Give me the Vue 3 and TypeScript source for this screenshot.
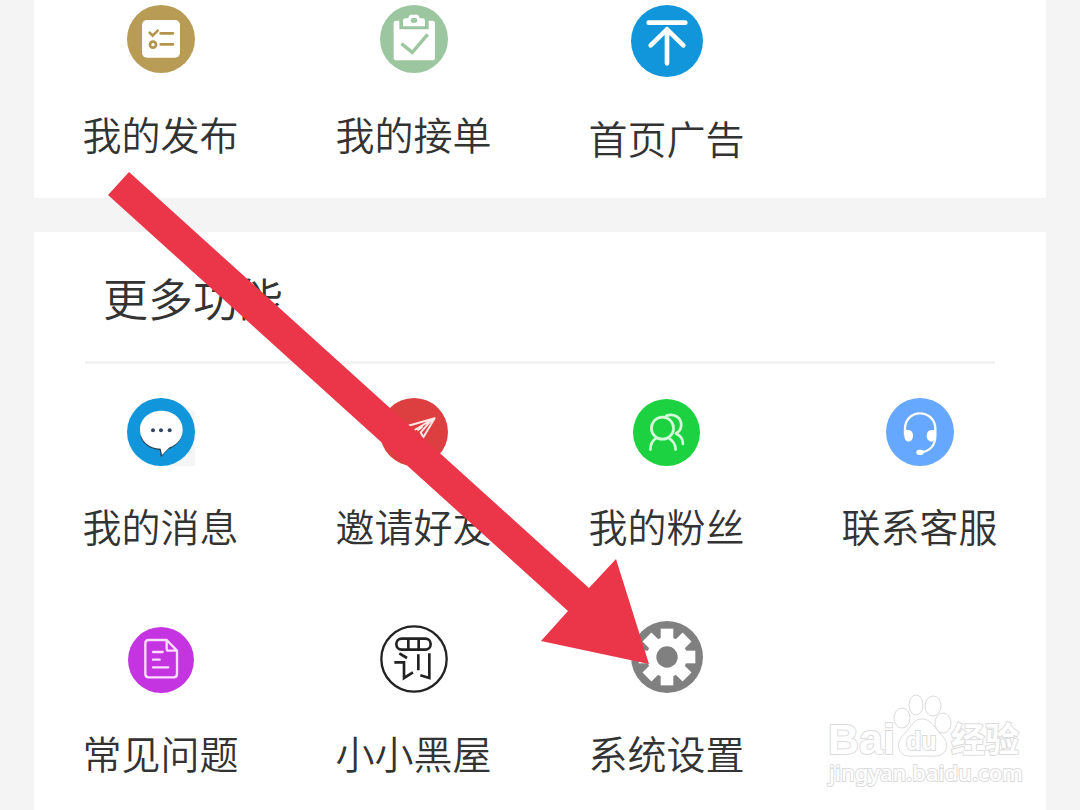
<script setup lang="ts">
interface Entry {
  id: string
  label: string
  size: number
  viewBox: string
}

const orders: Entry[] = [
  { id: 'publish', label: '我的发布', size: 68, viewBox: '168 15 204 204' },
  { id: 'accept', label: '我的接单', size: 68, viewBox: '162 15 204 204' },
  { id: 'advert', label: '首页广告', size: 72, viewBox: '150 15 216 216' },
]

const features: Entry[] = [
  { id: 'message', label: '我的消息', size: 68, viewBox: '168 55 204 204' },
  { id: 'invite', label: '邀请好友', size: 68, viewBox: '162 53 204 204' },
  { id: 'fans', label: '我的粉丝', size: 67, viewBox: '157 59 200 200' },
  { id: 'service', label: '联系客服', size: 68, viewBox: '165 53 204 204' },
  { id: 'faq', label: '常见问题', size: 66, viewBox: '171 50 198 198' },
  { id: 'blacklist', label: '小小黑屋', size: 68, viewBox: '162 45 204 204' },
  { id: 'settings', label: '系统设置', size: 72, viewBox: '300 213 216 216' },
]

const teeth = [0, 45, 90, 135, 180, 225, 270, 315]
</script>

<template>
  <main class="page">
    <nav class="card orders" aria-label="订单">
      <a v-for="item in orders" :key="item.id" class="entry" href="#">
        <svg class="icon" :width="item.size" :height="item.size" :viewBox="item.viewBox" aria-hidden="true">
          <g v-if="item.id === 'publish'">
            <circle cx="270" cy="117" r="102" fill="#b89b55" />
            <rect x="213" y="60" width="114" height="113" rx="15" fill="#fff" />
            <g fill="none" stroke="#b4944c" stroke-width="8" stroke-linecap="round">
              <path d="M236 98l9 9 15-15M269 100h37M269 133h37" />
              <circle cx="246" cy="134" r="9" />
            </g>
          </g>
          <g v-else-if="item.id === 'accept'">
            <circle cx="264" cy="117" r="102" fill="#9cc6a0" />
            <path d="M211 62h9v26h88V62h11q8 0 8 8v103q0 8-8 8H211q-8 0-8-8V70q0-8 8-8z" fill="#fff" />
            <path d="M231 79V63q0-8 8-8h6q3 0 4-6 1-5 6-5h18q5 0 6 5 1 6 4 6h6q8 0 8 8v16z" fill="#fff" />
            <ellipse cx="264" cy="61" rx="10" ry="8" fill="#9cc6a0" />
            <path d="M226 131l33 26 46-54" fill="none" stroke="#9cc6a0" stroke-width="10" />
          </g>
          <g v-else>
            <circle cx="258" cy="123" r="108" fill="#1296db" />
            <path d="M203 68h110M258 88v102M209 136l49-48 49 48" fill="none" stroke="#fff" stroke-width="14" stroke-linecap="round" stroke-linejoin="round" />
          </g>
        </svg>
        <span class="label">{{ item.label }}</span>
      </a>
    </nav>

    <section class="card more">
      <h2 class="title">更多功能</h2>
      <nav class="grid" aria-label="更多功能">
        <a v-for="item in features" :key="item.id" class="entry" href="#">
          <svg class="icon" :width="item.size" :height="item.size" :viewBox="item.viewBox" aria-hidden="true">
            <g v-if="item.id === 'message'">
              <path d="M340 78l32 20v161h-80z" fill="#f5f5f6" />
              <circle cx="270" cy="157" r="102" fill="#1296db" />
              <path d="M208 170c9 26 30 38 58 41l4 21c8-8 14-16 22-23 22-9 35-23 40-40z" fill="#263b4a" />
              <path d="M271 93c37 0 64 25 64 57 0 25-15 44-39 53-8 7-15 16-23 23l-4-19c-36-1-62-24-62-57 0-32 27-57 64-57z" fill="#fff" />
              <g fill="#34445c">
                <circle cx="246" cy="152" r="6" />
                <circle cx="270" cy="152" r="6" />
                <circle cx="296" cy="152" r="6" />
              </g>
            </g>
            <g v-else-if="item.id === 'invite'">
              <circle cx="264" cy="155" r="102" fill="#dd3f40" />
              <path d="M242 138l84-24-34 57-8-15 34-38-52 31M274 150l16-12" fill="none" stroke="#ffe6e4" stroke-width="6" stroke-linejoin="round" />
            </g>
            <g v-else-if="item.id === 'fans'">
              <circle cx="257" cy="159" r="100" fill="#1cd240" />
              <g fill="none" stroke="#d4fbd9" stroke-width="8" stroke-linecap="round">
                <circle cx="245" cy="146" r="33" />
                <path d="M256 109c23-8 45 5 45 27 0 13-6 21-16 26M209 210c0-17 7-29 19-35M264 176c13 8 20 19 20 34M286 163c14 6 20 16 20 30" />
              </g>
            </g>
            <g v-else-if="item.id === 'service'">
              <circle cx="267" cy="155" r="102" fill="#66a8ff" />
              <path d="M222 165v-20c0-27 20-46 45-46s46 19 46 46v21c0 29-17 48-47 50" fill="none" stroke="#fff" stroke-width="7" />
              <path d="M220 149h13q13 2 13 17t-13 18q-13-2-13-17zM314 149h-13q-14 2-14 17t14 18q13-2 13-17z" fill="#fff" />
              <rect x="256" y="208" width="22" height="16" rx="8" fill="#fff" />
            </g>
            <g v-else-if="item.id === 'faq'">
              <circle cx="270" cy="149" r="99" fill="#c434e0" />
              <path d="M287 89h-54q-10 0-10 10v92q0 10 10 10h75q10 0 10-10v-70zv26q0 6 6 6h25M246 125h29M246 148h20M246 171h46" fill="none" stroke="#fcdcff" stroke-width="7" stroke-linecap="round" stroke-linejoin="round" />
            </g>
            <g v-else-if="item.id === 'blacklist'" fill="none" stroke="#222">
              <circle cx="264" cy="147" r="98" stroke-width="7" />
              <rect x="211" y="86" width="103" height="33" rx="16" stroke-width="8" />
              <path d="M247 86v33M278 86v33M220 130l23 14M205 157h29v47l27-17M277 133v48M310 130v74l-27-8" stroke-width="8" />
            </g>
            <g v-else>
              <circle cx="408" cy="321" r="108" fill="#808080" />
              <circle cx="408" cy="321" r="60" fill="#fff" />
              <rect v-for="angle in teeth" :key="angle" x="389" y="236" width="38" height="50" fill="#fff" :transform="`rotate(${angle} 408 321)`" />
              <circle cx="408" cy="321" r="32" fill="#808080" />
            </g>
          </svg>
          <span class="label">{{ item.label }}</span>
        </a>
      </nav>
    </section>

    <svg class="pointer" viewBox="0 0 1080 810" aria-hidden="true">
      <path d="M129 172L589 588 616 559 649 664 541 641 568 611 108 195z" fill="#ea3648" />
    </svg>

    <svg class="watermark" width="220" height="110" viewBox="810 690 220 110" role="img" aria-label="Baidu 经验">
      <g class="mark">
        <ellipse cx="902" cy="718" rx="8" ry="10" />
        <ellipse cx="916" cy="705" rx="7" ry="10" />
        <ellipse cx="933" cy="706" rx="8" ry="10" />
        <ellipse cx="943" cy="723" rx="8" ry="10" />
        <path d="M922 719c9 0 12 8 17 13 6 6 9 11 7 17-3 9-12 7-24 7s-20 2-23-7c-2-6 1-11 7-17 5-5 7-13 16-13z" />
        <text class="brand" x="828" y="754">Bai</text>
        <text class="du" x="906" y="750">du</text>
        <text class="cjk" x="951" y="752">经验</text>
        <text class="url" x="829" y="781">jingyan.baidu.com</text>
      </g>
    </svg>
  </main>
</template>

<style>
body {
  margin: 0;
  background: #f4f4f4;
}
</style>

<style scoped>
.page {
  position: relative;
  display: flex;
  flex-direction: column;
  gap: 34px;
  box-sizing: border-box;
  min-height: 100vh;
  padding: 0 34px;
  overflow: hidden;
  color: #333;
  font-family: "Noto Sans CJK SC", "Noto Sans", sans-serif;
}

.card {
  background: #fff;
}

.orders,
.grid {
  display: grid;
  grid-template-columns: repeat(4, 1fr);
}

.orders {
  align-items: start;
  padding: 5px 0 33px;
}

.orders .entry {
  gap: 32px;
}

.more {
  flex: 1;
}

.title {
  margin: 0 51px;
  padding: 34px 18px 31px;
  border-bottom: 3px solid #f3f3f3;
  font-size: 45px;
  font-weight: 350;
  line-height: 64px;
}

.grid {
  align-items: end;
  row-gap: 68px;
  padding: 34px 0 24px;
}

.entry {
  display: flex;
  flex-direction: column;
  align-items: center;
  gap: 31px;
  color: inherit;
  text-decoration: none;
}

.icon {
  display: block;
}

.label {
  font-size: 39px;
  font-weight: 350;
  line-height: 56px;
  white-space: nowrap;
}

.pointer {
  position: absolute;
  top: 0;
  left: 0;
  width: 1080px;
  height: 810px;
  pointer-events: none;
}

.watermark {
  position: absolute;
  right: 50px;
  bottom: 10px;
  pointer-events: none;
}

.mark {
  fill: #fff;
  stroke: #dcdcdc;
  stroke-width: 1;
}

.mark text {
  stroke-width: 2;
  paint-order: stroke;
}

.brand {
  font: bold 43px "Liberation Sans", sans-serif;
}

.du {
  font: bold 25px "Liberation Sans", sans-serif;
}

.cjk {
  font: bold 34px "Noto Sans CJK SC", sans-serif;
}

.url {
  font: 500 22px "Noto Sans", sans-serif;
}
</style>
